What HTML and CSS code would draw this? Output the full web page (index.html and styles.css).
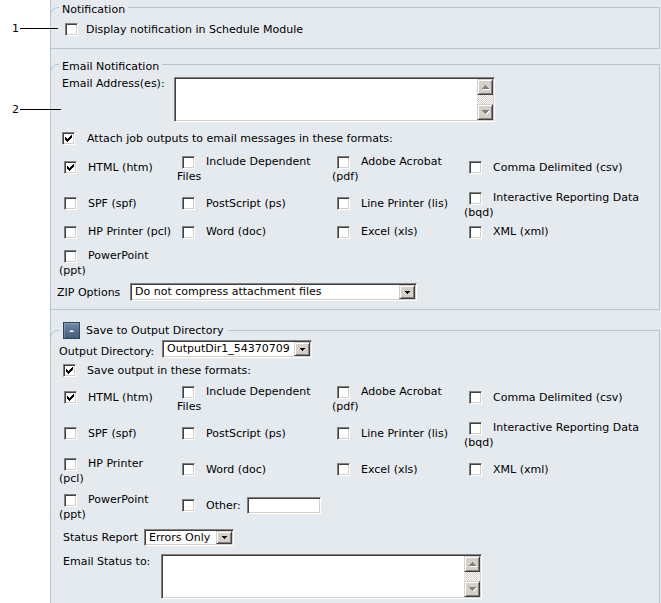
FILE: index.html
```html
<!DOCTYPE html>
<html lang="en">
<head>
<meta charset="utf-8">
<title>Notification options</title>
<link rel="stylesheet" href="styles.css">
</head>
<body>
<div class="page">
  <div class="gutter"></div>
  <div class="panel">

    <fieldset class="grp grp1">
      <legend class="lg">Notification</legend>
      <label class="line line1"><span class="cb"></span>Display notification in Schedule Module</label>
    </fieldset>

    <fieldset class="grp grp2">
      <legend class="lg">Email Notification</legend>
      <div class="addr">
        <span class="lbl lbl-addr">Email Address(es):</span>
        <div class="ta ta-addr">
          <div class="ta-body"></div>
          <div class="sb">
            <span class="sb-btn"><svg width="7" height="5" viewBox="0 0 7 5"><path class="arr-sh" d="M4 1H5V2H6V3H7V4H8V5H1V4H2V3H3V2H4Z"/><path class="arr" d="M3 0H4V1H5V2H6V3H7V4H0V3H1V2H2V1H3Z"/></svg></span>
            <span class="sb-track"></span>
            <span class="sb-btn"><svg width="7" height="5" viewBox="0 0 7 5"><path class="arr-sh" d="M1 1H8V2H7V3H6V4H5V5H4V4H3V3H2V2H1Z"/><path class="arr" d="M0 0H7V1H6V2H5V3H4V4H3V3H2V2H1V1H0Z"/></svg></span>
          </div>
        </div>
      </div>
      <label class="line line-attach"><span class="cb on"><svg width="11" height="11" viewBox="0 0 11 11"><path d="M2 4H3V5H4V6H5V5H6V4H7V3H8V2H9V5H8V6H7V7H6V8H5V9H4V8H3V7H2Z"/></svg></span>Attach job outputs to email messages in these formats:</label>

      <div class="fmt fmt-email">
        <div class="cell"><label class="opt"><span class="cb on"><svg width="11" height="11" viewBox="0 0 11 11"><path d="M2 4H3V5H4V6H5V5H6V4H7V3H8V2H9V5H8V6H7V7H6V8H5V9H4V8H3V7H2Z"/></svg></span>HTML (htm)</label></div>
        <div class="cell"><label class="opt two"><span class="cb"></span>Include Dependent<br>Files</label></div>
        <div class="cell"><label class="opt two"><span class="cb"></span>Adobe Acrobat<br>(pdf)</label></div>
        <div class="cell"><label class="opt"><span class="cb"></span>Comma Delimited (csv)</label></div>

        <div class="cell"><label class="opt"><span class="cb"></span>SPF (spf)</label></div>
        <div class="cell"><label class="opt"><span class="cb"></span>PostScript (ps)</label></div>
        <div class="cell"><label class="opt"><span class="cb"></span>Line Printer (lis)</label></div>
        <div class="cell"><label class="opt two"><span class="cb"></span>Interactive Reporting Data<br>(bqd)</label></div>

        <div class="cell"><label class="opt"><span class="cb"></span>HP Printer (pcl)</label></div>
        <div class="cell"><label class="opt"><span class="cb"></span>Word (doc)</label></div>
        <div class="cell"><label class="opt"><span class="cb"></span>Excel (xls)</label></div>
        <div class="cell"><label class="opt"><span class="cb"></span>XML (xml)</label></div>

        <div class="cell"><label class="opt two"><span class="cb"></span>PowerPoint<br>(ppt)</label></div>
      </div>

      <div class="zip">
        <span class="lbl lbl-zip">ZIP Options</span>
        <div class="sel sel-zip"><span class="sel-val">Do not compress attachment files</span><span class="sel-btn"><svg width="5" height="3" viewBox="0 0 5 3"><path d="M0 0H5V1H4V2H3V3H2V2H1V1H0Z"/></svg></span></div>
      </div>
    </fieldset>

    <fieldset class="grp grp3">
      <legend class="lg lg3"><span class="lgin"><button class="tog" type="button">-</button><span class="lgtxt">Save to Output Directory</span></span></legend>
      <div class="odir">
        <span class="lbl lbl-odir">Output Directory:</span>
        <div class="sel sel-odir"><span class="sel-val">OutputDir1_54370709</span><span class="sel-btn"><svg width="5" height="3" viewBox="0 0 5 3"><path d="M0 0H5V1H4V2H3V3H2V2H1V1H0Z"/></svg></span></div>
      </div>
      <label class="line line-save"><span class="cb on"><svg width="11" height="11" viewBox="0 0 11 11"><path d="M2 4H3V5H4V6H5V5H6V4H7V3H8V2H9V5H8V6H7V7H6V8H5V9H4V8H3V7H2Z"/></svg></span>Save output in these formats:</label>

      <div class="fmt fmt-save">
        <div class="cell"><label class="opt"><span class="cb on"><svg width="11" height="11" viewBox="0 0 11 11"><path d="M2 4H3V5H4V6H5V5H6V4H7V3H8V2H9V5H8V6H7V7H6V8H5V9H4V8H3V7H2Z"/></svg></span>HTML (htm)</label></div>
        <div class="cell"><label class="opt two"><span class="cb"></span>Include Dependent<br>Files</label></div>
        <div class="cell"><label class="opt two"><span class="cb"></span>Adobe Acrobat<br>(pdf)</label></div>
        <div class="cell"><label class="opt"><span class="cb"></span>Comma Delimited (csv)</label></div>

        <div class="cell"><label class="opt"><span class="cb"></span>SPF (spf)</label></div>
        <div class="cell"><label class="opt"><span class="cb"></span>PostScript (ps)</label></div>
        <div class="cell"><label class="opt"><span class="cb"></span>Line Printer (lis)</label></div>
        <div class="cell"><label class="opt two"><span class="cb"></span>Interactive Reporting Data<br>(bqd)</label></div>

        <div class="cell"><label class="opt two"><span class="cb"></span>HP Printer<br>(pcl)</label></div>
        <div class="cell"><label class="opt"><span class="cb"></span>Word (doc)</label></div>
        <div class="cell"><label class="opt"><span class="cb"></span>Excel (xls)</label></div>
        <div class="cell"><label class="opt"><span class="cb"></span>XML (xml)</label></div>

        <div class="cell"><label class="opt two"><span class="cb"></span>PowerPoint<br>(ppt)</label></div>
        <div class="cell"><label class="opt"><span class="cb"></span>Other:<span class="txt"></span></label></div>
      </div>

      <div class="status">
        <span class="lbl lbl-status">Status Report</span>
        <div class="sel sel-status"><span class="sel-val">Errors Only</span><span class="sel-btn"><svg width="5" height="3" viewBox="0 0 5 3"><path d="M0 0H5V1H4V2H3V3H2V2H1V1H0Z"/></svg></span></div>
      </div>
      <div class="estat">
        <span class="lbl lbl-estat">Email Status to:</span>
        <div class="ta">
          <div class="ta-body"></div>
          <div class="sb">
            <span class="sb-btn"><svg width="7" height="5" viewBox="0 0 7 5"><path class="arr-sh" d="M4 1H5V2H6V3H7V4H8V5H1V4H2V3H3V2H4Z"/><path class="arr" d="M3 0H4V1H5V2H6V3H7V4H0V3H1V2H2V1H3Z"/></svg></span>
            <span class="sb-track"></span>
            <span class="sb-btn"><svg width="7" height="5" viewBox="0 0 7 5"><path class="arr-sh" d="M1 1H8V2H7V3H6V4H5V5H4V4H3V3H2V2H1Z"/><path class="arr" d="M0 0H7V1H6V2H5V3H4V4H3V3H2V2H1V1H0Z"/></svg></span>
          </div>
        </div>
      </div>
    </fieldset>

  </div>

  <div class="callout c1"><span>1</span><i class="ln ln1"></i></div>
  <div class="callout c2"><span>2</span><i class="ln ln2"></i></div>
</div>
</body>
</html>
```

FILE: styles.css
```css
html, body {
  margin: 0;
  padding: 0;
  overflow: hidden;
  background: #fff;
}
body {
  font-family: "DejaVu Sans", Verdana, sans-serif;
  font-size: 11px;
  line-height: 15px;
  color: #000;
}
.page {
  position: relative;
  display: flex;
  width: 661px;
  height: 603px;
}
.gutter {
  width: 50px;
  flex: none;
}
.panel {
  flex: 1;
  min-width: 0;
  background: #e5eaef;
  border-left: 1px solid #b9c3d0;
}

/* group boxes */
.grp {
  border: 1px solid #b9c3d0;
  border-top-left-radius: 8px;
  margin: 0 1px 0 -1px;
  padding: 0 0 0 11px;
  min-width: 0;
}
.grp1 { margin-top: -3px; padding-top: 4px; padding-bottom: 11px; }
.grp2 { margin-top: 5px; padding-top: 2px; padding-bottom: 8px; }
.grp3 { margin-top: 12px; padding-top: 1px; padding-bottom: 20px; }

.lg {
  padding: 5px 3px 0;
  margin-left: -3px;
  line-height: 15px;
}
.lg3 { padding: 0 5px 0 4px; }
.lgin {
  display: flex;
  align-items: center;
  height: 17px;
}
.tog {
  box-sizing: border-box;
  width: 17px;
  height: 17px;
  padding: 0;
  margin: 0;
  border: 1px solid #2f4259;
  background: linear-gradient(#6f8aa9, #435e7c);
  box-shadow: inset 1px 1px rgba(255,255,255,0.18);
  color: #fff;
  font: bold 11px/13px "DejaVu Sans", sans-serif;
}
.lgtxt { margin-left: 6px; }

/* checkbox */
.cb {
  display: inline-block;
  box-sizing: border-box;
  width: 13px;
  height: 13px;
  flex: none;
  vertical-align: middle;
  background: #fff;
  border: 1px solid;
  border-color: #808080 #fff #fff #808080;
  box-shadow: inset 1px 1px #404040, inset -1px -1px #d4d0c8;
}
.cb svg { display: block; shape-rendering: crispEdges; }
.cb svg path { fill: #000; }

.line {
  display: flex;
  align-items: center;
  height: 16px;
}
.line1 .cb { margin: 0 8px 0 3px; }
.line-attach { margin-top: 8px; }
.line-attach .cb { margin: 0 12px 0 0; }
.line-save { margin-top: 3px; }
.line-save .cb { margin: 0 11px 0 1px; }

/* format grid */
.fmt {
  display: grid;
  grid-template-columns: 118px 155px 132px 1fr;
  margin-left: -3px;
}
.fmt-email { margin-top: 5px; grid-template-rows: 36px 36px 21px 38px; }
.fmt-save { margin-top: 3px; grid-auto-rows: 36px; }
.cell {
  display: flex;
  align-items: center;
}
.opt {
  white-space: nowrap;
  line-height: 15px;
  margin-bottom: 4px;
}
.opt.two { margin-bottom: 0; }
.opt .cb { margin: 0 11px 0 5px; }

/* labels + controls rows */
.lbl { flex: none; white-space: nowrap; }
.addr { display: flex; }
.lbl-addr { width: 112px; }
.ta-addr { margin-top: 1px; }

.zip {
  display: flex;
  align-items: center;
  margin-top: 1px;
  margin-left: -5px;
}
.lbl-zip { width: 73px; }

.odir {
  display: flex;
  align-items: flex-start;
  margin-left: -3px;
}
.lbl-odir { width: 103px; padding-top: 4px; }

.status {
  display: flex;
  align-items: center;
  margin-top: 4px;
  margin-left: 1px;
}
.lbl-status { width: 81px; }

.estat {
  display: flex;
  margin-top: 8px;
  margin-left: 1px;
}
.lbl-estat { width: 98px; }

/* sunken controls */
.sel, .ta, .txt {
  box-sizing: border-box;
  background: #fff;
  border: 1px solid;
  border-color: #808080 #fff #fff #808080;
  box-shadow: inset 1px 1px #404040, inset -1px -1px #d4d0c8;
  padding: 1px;
}
.sel {
  display: flex;
  height: 18px;
}
.sel-zip { width: 287px; }
.sel-odir { width: 150px; }
.sel-status { width: 90px; height: 17px; }
.sel-val {
  flex: 1;
  min-width: 0;
  overflow: hidden;
  white-space: nowrap;
  padding-left: 3px;
  line-height: 14px;
}
.sel-status .sel-val { line-height: 13px; }
.sel-btn, .sb-btn {
  box-sizing: border-box;
  flex: none;
  display: flex;
  align-items: center;
  justify-content: center;
  background: #d4d0c8;
  border: 1px solid;
  border-color: #d4d0c8 #404040 #404040 #d4d0c8;
  box-shadow: inset 1px 1px #fff, inset -1px -1px #808080;
}
.sel-btn { width: 16px; }
.sel-btn svg { display: block; shape-rendering: crispEdges; }
.sel-btn svg path { fill: #000; }

.ta {
  display: flex;
  width: 321px;
  height: 45px;
}
.ta-body { flex: 1; }
.sb {
  width: 16px;
  display: flex;
  flex-direction: column;
}
.sb-btn { height: 16px; }
.sb-btn svg { display: block; overflow: visible; shape-rendering: crispEdges; }
.sb-btn .arr { fill: #808080; }
.sb-btn .arr-sh { fill: #fff; }
.sb-track {
  flex: 1;
  background: repeating-conic-gradient(#d4d0c8 0 25%, #fff 0 50%) 0 0 / 2px 2px;
}

.txt {
  display: inline-block;
  width: 74px;
  height: 17px;
  vertical-align: middle;
  margin-left: 6px;
}

/* callouts */
.callout {
  position: absolute;
  left: 12px;
  display: flex;
  align-items: center;
  height: 15px;
}
.c1 { top: 21px; }
.c2 { top: 102px; }
.ln {
  display: block;
  height: 1px;
  background: #000;
  margin-left: 1px;
}
.ln1 { width: 38px; }
.ln2 { width: 41px; }
```
